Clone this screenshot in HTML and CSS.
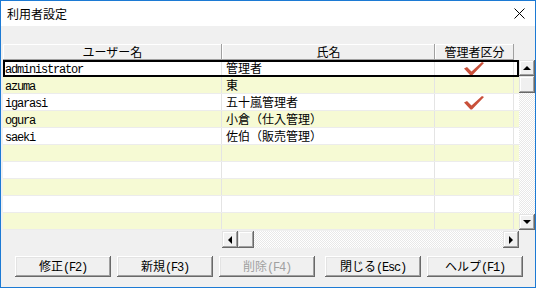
FILE: index.html
```html
<!DOCTYPE html>
<html>
<head>
<meta charset="utf-8">
<link rel="stylesheet" href="styles.css">
</head>
<body>
<div class="win">
  <div class="title">
    <span class="caption">利用者設定</span>
    <svg class="close" width="11" height="11" viewBox="0 0 11 11"><path d="M0.5 0.5 L10.5 10.5 M10.5 0.5 L0.5 10.5" stroke="#000" stroke-width="1" fill="none"/></svg>
  </div>
  <div class="client">
    <div class="list">
      <div class="head">
        <div class="hc c1">ユーザー名</div>
        <div class="hc c2">氏名</div>
        <div class="hc c3">管理者区分</div>
      </div>
      <div class="body">
        <div class="rows">
          <div class="row sel">
            <div class="cell c1"><span class="a">administrator</span></div>
            <div class="cell c2">管理者</div>
            <div class="cell c3"><svg class="chk" width="20" height="14" viewBox="0 0 20 14"><path d="M0 6.5 L3 5 L7.5 9.5 L18 0 L20 1 L8 13.5 L6.5 13.5 Z" fill="#c9503a"/></svg></div>
            <div class="cell c4"></div>
          </div>
          <div class="row alt">
            <div class="cell c1"><span class="a">azuma</span></div>
            <div class="cell c2">東</div>
            <div class="cell c3"></div>
            <div class="cell c4"></div>
          </div>
          <div class="row">
            <div class="cell c1"><span class="a">igarasi</span></div>
            <div class="cell c2">五十嵐管理者</div>
            <div class="cell c3"><svg class="chk" width="20" height="14" viewBox="0 0 20 14"><path d="M0 6.5 L3 5 L7.5 9.5 L18 0 L20 1 L8 13.5 L6.5 13.5 Z" fill="#c9503a"/></svg></div>
            <div class="cell c4"></div>
          </div>
          <div class="row alt">
            <div class="cell c1"><span class="a">ogura</span></div>
            <div class="cell c2">小倉（仕入管理）</div>
            <div class="cell c3"></div>
            <div class="cell c4"></div>
          </div>
          <div class="row">
            <div class="cell c1"><span class="a">saeki</span></div>
            <div class="cell c2">佐伯（販売管理）</div>
            <div class="cell c3"></div>
            <div class="cell c4"></div>
          </div>
          <div class="row alt"><div class="cell c1"></div><div class="cell c2"></div><div class="cell c3"></div><div class="cell c4"></div></div>
          <div class="row"><div class="cell c1"></div><div class="cell c2"></div><div class="cell c3"></div><div class="cell c4"></div></div>
          <div class="row alt"><div class="cell c1"></div><div class="cell c2"></div><div class="cell c3"></div><div class="cell c4"></div></div>
          <div class="row"><div class="cell c1"></div><div class="cell c2"></div><div class="cell c3"></div><div class="cell c4"></div></div>
          <div class="row alt"><div class="cell c1"></div><div class="cell c2"></div><div class="cell c3"></div><div class="cell c4"></div></div>
        </div>
        <div class="vscroll">
          <div class="sb up"><span class="tri tri-up"></span></div>
          <div class="sb thumb-v"></div>
          <div class="track"></div>
          <div class="sb down"><span class="tri tri-down"></span></div>
        </div>
      </div>
      <div class="hscroll">
        <div class="sb"><span class="tri tri-left"></span></div>
        <div class="sb thumb-h"></div>
        <div class="track"></div>
        <div class="sb"><span class="tri tri-right"></span></div>
      </div>
    </div>
    <div class="btns">
      <div class="btn">修正<span class="a">(F2)</span></div>
      <div class="btn">新規<span class="a">(F3)</span></div>
      <div class="btn off">削除<span class="a">(F4)</span></div>
      <div class="btn sep">閉じる<span class="a">(Esc)</span></div>
      <div class="btn">ヘルプ<span class="a">(F1)</span></div>
    </div>
  </div>
</div>
</body>
</html>
```

FILE: styles.css
```css
html, body {
    margin: 0;
    padding: 0;
    background-color: #f0f0f0;
}
body {
    font-family: "Noto Sans CJK JP", sans-serif;
    font-size: 12px;
    color: #000;
}
.win {
    box-sizing: border-box;
    width: 536px;
    height: 288px;
    border: 1px #1c7ad4 solid;
    background-color: #f0f0f0;
    overflow: hidden;
}
.title {
    display: flex;
    align-items: center;
    justify-content: space-between;
    height: 25px;
    padding: 0 10px 0 6px;
    background-color: #fff;
}
.caption {
    font-size: 12px;
    line-height: 14px;
}
.close {
    display: block;
}
.client {
    padding: 18px 0 0 2px;
}
.a {
    font-family: "Liberation Mono", monospace;
    font-size: 12px;
    letter-spacing: -1.2px;
}

/* grid */
.head {
    display: flex;
    height: 16px;
}
.hc {
    box-sizing: border-box;
    height: 16px;
    line-height: 15px;
    text-align: center;
    background-color: #f0f0f0;
    box-shadow: inset -1px -1px 0 #a0a0a0, inset 1px 1px 0 #fff;
}
.c1 { width: 219px; }
.c2 { width: 213px; }
.c3 { width: 79px; }
.c4 { width: 5px; }
.body {
    display: flex;
}
.rows {
    width: 516px;
    height: 170px;
    background-color: #fff;
}
.row {
    box-sizing: border-box;
    display: flex;
    height: 17px;
    border-bottom: 1px #ececec solid;
    background-color: #fff;
}
.row.alt {
    background-color: #f6fad4;
}
.row.sel {
    outline: 2px #000 solid;
    outline-offset: -2px;
}
.cell {
    box-sizing: border-box;
    height: 16px;
    line-height: 16px;
    white-space: nowrap;
    border-right: 1px #e4e4e4 solid;
}
.cell.c1 {
    padding-left: 2px;
}
.cell.c2 {
    padding-left: 4px;
}
.cell.c3 {
    display: flex;
    justify-content: center;
    align-items: center;
}
.cell.c4 {
    border-right: 0;
}
.chk {
    display: block;
    margin-top: 1px;
}

/* scrollbars */
.vscroll {
    display: flex;
    flex-direction: column;
    width: 16px;
    height: 170px;
}
.hscroll {
    display: flex;
    margin: 1px 0 0 219px;
    width: 297px;
    height: 17px;
}
.sb {
    box-sizing: border-box;
    display: flex;
    align-items: center;
    justify-content: center;
    width: 16px;
    height: 17px;
    flex: none;
    background-color: #f0f0f0;
    box-shadow: inset -1px -1px 0 #696969, inset 1px 1px 0 #e3e3e3, inset -2px -2px 0 #a0a0a0, inset 2px 2px 0 #fff;
}
.vscroll .sb {
    width: 16px;
    height: 16px;
}
.thumb-v {
    height: 17px !important;
}
.track {
    flex: 1;
    background-color: #fff;
    background-image: conic-gradient(#e8e8e8 25%, #fff 0 50%, #e8e8e8 0 75%, #fff 0);
    background-size: 2px 2px;
}
.tri {
    width: 0;
    height: 0;
    border: 4px transparent solid;
}
.tri-up {
    border-top: 0;
    border-bottom: 4px #000 solid;
}
.tri-down {
    border-bottom: 0;
    border-top: 4px #000 solid;
}
.tri-left {
    border-left: 0;
    border-right: 4px #000 solid;
}
.tri-right {
    border-right: 0;
    border-left: 4px #000 solid;
}

/* buttons */
.btns {
    display: flex;
    gap: 6px;
    margin-top: 8px;
    padding-left: 12px;
}
.btn {
    box-sizing: border-box;
    width: 96px;
    height: 21px;
    line-height: 20px;
    text-align: center;
    background-color: #f0f0f0;
    box-shadow: inset -1px -1px 0 #696969, inset 1px 1px 0 #fff, inset -2px -2px 0 #a0a0a0, inset 2px 2px 0 #e3e3e3;
}
.btn.off {
    color: #a0a0a0;
}
.btn.sep {
    margin-left: 4px;
}
```
